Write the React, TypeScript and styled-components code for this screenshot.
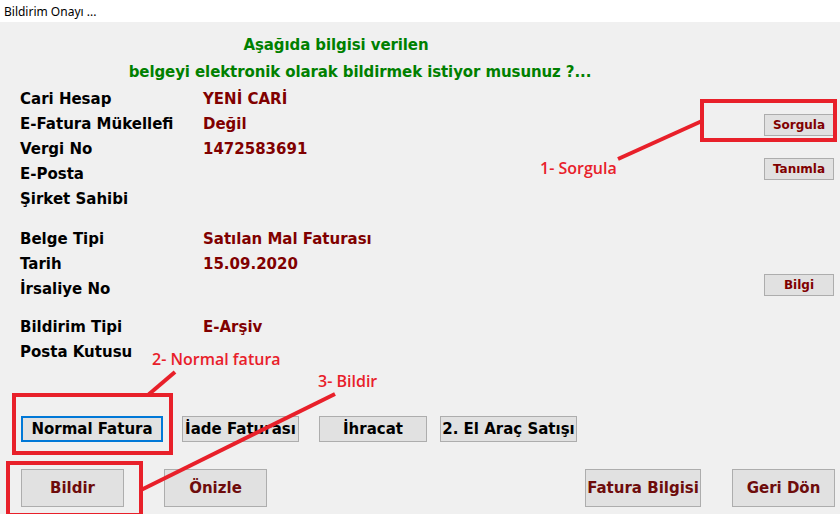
import React from "react";
import styled, { createGlobalStyle } from "styled-components";

const GlobalStyle = createGlobalStyle`
  html, body { margin: 0; padding: 0; background: #f0f0f0; }
  * { box-sizing: border-box; }
`;

const FONT = `"DejaVu Sans", Verdana, sans-serif`;
const RED = "#e8202a";

const Window = styled.div`
  position: relative;
  width: 840px;
  height: 514px;
  overflow: hidden;
  display: flex;
  flex-direction: column;
  background: #f0f0f0;
  font-family: ${FONT};
`;

const TitleBar = styled.div`
  height: 22px;
  background: #ffffff;
  display: flex;
  align-items: center;
  padding-left: 4px;
  font-family: "Noto Sans", "Open Sans", sans-serif;
  font-size: 12px;
  color: #000;
`;

const Body = styled.div`
  flex: 1;
  display: flex;
  flex-direction: column;
  padding-top: 10px;
`;

const Heading = styled.div`
  text-align: center;
  color: #008000;
  font-weight: bold;
  font-size: 15px;
  line-height: 27px;
  letter-spacing: -0.1px;
`;

const HeadLine = styled.div<{ $shift: number }>`
  margin-left: ${(p) => p.$shift}px;
`;

const Group = styled.div<{ $gap: number }>`
  display: flex;
  flex-direction: column;
  margin-top: ${(p) => p.$gap}px;
`;

const Row = styled.div`
  display: grid;
  grid-template-columns: 183px 1fr auto;
  align-items: center;
  height: 25px;
  padding: 0 6px 0 20px;
  font-weight: bold;
  font-size: 15px;
`;

const Label = styled.span`
  color: #000;
`;

const Value = styled.span`
  color: #800000;
`;

const SmallButton = styled.button<{ $dy?: number }>`
  width: 70px;
  height: 22px;
  margin-top: ${(p) => p.$dy ?? 0}px;
  background: #e1e1e1;
  border: 1px solid #adadad;
  font-family: ${FONT};
  font-weight: bold;
  font-size: 12px;
  color: #800000;
  padding: 0;
`;

const TypeRow = styled.div`
  display: flex;
  align-items: center;
  margin-top: 52px;
  padding-left: 20px;
`;

const TypeButton = styled.button<{ $w: number; $ml: number; $focus?: boolean }>`
  width: ${(p) => p.$w}px;
  height: 26px;
  margin-left: ${(p) => p.$ml}px;
  background: #e1e1e1;
  border: ${(p) => (p.$focus ? "2px solid #0078d7" : "1px solid #adadad")};
  font-family: ${FONT};
  font-weight: bold;
  font-size: 15px;
  color: #000;
  padding: 0;
  white-space: nowrap;
`;

const ActionRow = styled.div`
  display: flex;
  align-items: center;
  margin-top: 27px;
  padding-left: 21px;
`;

const ActionButton = styled.button<{ $w: number; $ml: number }>`
  width: ${(p) => p.$w}px;
  height: 38px;
  margin-left: ${(p) => p.$ml}px;
  background: #e1e1e1;
  border: 1px solid #adadad;
  font-family: ${FONT};
  font-weight: bold;
  font-size: 15px;
  color: #6e0c0c;
  padding: 0;
  white-space: nowrap;
`;

const Overlay = styled.svg`
  position: absolute;
  left: 0;
  top: 0;
  width: 840px;
  height: 514px;
  pointer-events: none;
`;

const Note = styled.div<{ $x: number; $y: number }>`
  position: absolute;
  left: ${(p) => p.$x}px;
  top: ${(p) => p.$y}px;
  color: ${RED};
  font-family: "Open Sans", "Noto Sans", sans-serif;
  font-weight: 600;
  font-size: 16px;
  line-height: 20px;
  white-space: nowrap;
`;

type Item = { label: string; value?: string; button?: string; dy?: number };

const group1: Item[] = [
  { label: "Cari Hesap", value: "YENİ CARİ" },
  { label: "E-Fatura Mükellefi", value: "Değil", button: "Sorgula", dy: 2 },
  { label: "Vergi No", value: "1472583691" },
  { label: "E-Posta", button: "Tanımla", dy: -10 },
  { label: "Şirket Sahibi" },
];

const group2: Item[] = [
  { label: "Belge Tipi", value: "Satılan Mal Faturası" },
  { label: "Tarih", value: "15.09.2020" },
  { label: "İrsaliye No", button: "Bilgi", dy: -7 },
];

const group3: Item[] = [
  { label: "Bildirim Tipi", value: "E-Arşiv" },
  { label: "Posta Kutusu" },
];

const renderRows = (items: Item[]) =>
  items.map((it) => (
    <Row key={it.label}>
      <Label>{it.label}</Label>
      <Value>{it.value ?? ""}</Value>
      {it.button ? <SmallButton $dy={it.dy}>{it.button}</SmallButton> : <span />}
    </Row>
  ));

export default function App() {
  return (
    <>
      <GlobalStyle />
      <Window>
        <TitleBar>Bildirim Onayı ...</TitleBar>
        <Body>
          <Heading>
            <HeadLine $shift={-168}>Aşağıda bilgisi verilen</HeadLine>
            <HeadLine $shift={-120}>belgeyi elektronik olarak bildirmek istiyor musunuz ?...</HeadLine>
          </Heading>
          <Group $gap={0}>{renderRows(group1)}</Group>
          <Group $gap={15}>{renderRows(group2)}</Group>
          <Group $gap={13}>{renderRows(group3)}</Group>
          <TypeRow>
            <TypeButton $w={142} $ml={1} $focus>Normal Fatura</TypeButton>
            <TypeButton $w={117} $ml={19}>İade Faturası</TypeButton>
            <TypeButton $w={108} $ml={20}>İhracat</TypeButton>
            <TypeButton $w={137} $ml={13}>2. El Araç Satışı</TypeButton>
          </TypeRow>
          <ActionRow>
            <ActionButton $w={103} $ml={0}>Bildir</ActionButton>
            <ActionButton $w={103} $ml={40}>Önizle</ActionButton>
            <ActionButton $w={116} $ml={318}>Fatura Bilgisi</ActionButton>
            <ActionButton $w={103} $ml={31}>Geri Dön</ActionButton>
          </ActionRow>
        </Body>
        <Overlay viewBox="0 0 840 514">
          <g stroke={RED} strokeWidth={4} fill="none">
            <rect x={702} y={101} width={133} height={39} />
            <rect x={14} y={395} width={157} height={58} />
            <rect x={8} y={463} width={133} height={52} />
            <line x1={618} y1={159} x2={702} y2={121} />
            <line x1={148} y1={395} x2={175} y2={372} />
            <line x1={141} y1={490} x2={335} y2={394} />
          </g>
        </Overlay>
        <Note $x={540} $y={158}>1- Sorgula</Note>
        <Note $x={152} $y={349}>2- Normal fatura</Note>
        <Note $x={318} $y={371}>3- Bildir</Note>
      </Window>
    </>
  );
}
